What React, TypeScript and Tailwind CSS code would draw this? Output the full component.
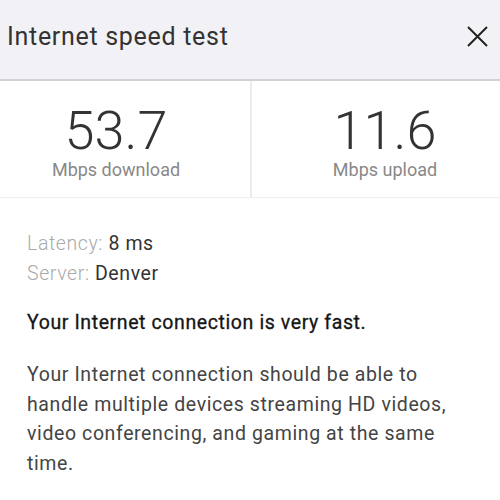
const STATS = [
  { value: '53.7', label: 'Mbps download', pad: 'pr-[18px]' },
  { value: '11.6', label: 'Mbps upload', pad: 'pl-[18px] border-l-2 border-[#ececec]' },
]

export default function App() {
  return (
    <div className="w-[500px] h-[500px] overflow-hidden bg-white font-['Roboto',sans-serif]">
      {/* Header */}
      <div className="h-[81px] flex items-center justify-between pl-[7px] pr-[12px] pb-[6px] bg-[#f2f2f6] border-b-2 border-[#d2d2d4]">
        <h1 className="text-[25px] tracking-[0.7px] text-[#333] leading-none">Internet speed test</h1>
        <svg width="21" height="21" viewBox="0 0 21 21" className="text-[#222]">
          <path d="M1 1L20 20M20 1L1 20" stroke="currentColor" strokeWidth="2" />
        </svg>
      </div>

      {/* Stats */}
      <div className="grid grid-cols-2 h-[117px] border-b border-[#efefef]">
        {STATS.map(s => (
          <div key={s.label} className={`flex flex-col items-center justify-center ${s.pad}`}>
            <div className="text-[54px] font-light text-[#333] leading-none mt-[4px]">{s.value}</div>
            <div className="text-[18px] text-[#888] leading-none mt-[3px]">{s.label}</div>
          </div>
        ))}
      </div>

      {/* Details */}
      <div className="px-[27px] pt-[31px] text-[19.5px] tracking-[0.6px] leading-[30px]">
        <div>
          <span className="font-light text-[#aaa]">Latency: </span>
          <span className="text-[#333]">8 ms</span>
        </div>
        <div>
          <span className="font-light text-[#aaa]">Server: </span>
          <span className="text-[#333]">Denver</span>
        </div>
        <p className="mt-[19px] text-[#151515] [-webkit-text-stroke:0.3px_#151515]">Your Internet connection is very fast.</p>
        <p className="mt-[22px] text-[#444] leading-[29.7px]">
          Your Internet connection should be able to handle multiple devices streaming HD videos, video conferencing, and gaming at the same time.
        </p>
      </div>
    </div>
  )
}
